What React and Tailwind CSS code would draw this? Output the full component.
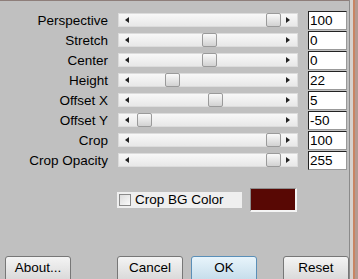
const rows = [
  { label: "Perspective", value: "100", thumb: 147 },
  { label: "Stretch", value: "0", thumb: 83 },
  { label: "Center", value: "0", thumb: 83 },
  { label: "Height", value: "22", thumb: 46 },
  { label: "Offset X", value: "5", thumb: 89 },
  { label: "Offset Y", value: "-50", thumb: 18 },
  { label: "Crop", value: "100", thumb: 147 },
  { label: "Crop Opacity", value: "255", thumb: 147 },
];

function Slider({ thumb }) {
  return (
    <div className="relative w-[180px] h-[14px] bg-gradient-to-b from-[#f8f8f8] to-[#e8e8e8] border border-[#dcdcdc]">
      <span className="absolute left-[6px] top-[3px] w-0 h-0 border-y-[3.5px] border-y-transparent border-r-[4px] border-r-[#222]" />
      <span
        className="absolute top-[-1px] w-[15px] h-[14px] rounded-[2px] border border-[#9a9a9a] bg-gradient-to-b from-[#fafafa] to-[#d2d2d2]"
        style={{ left: thumb }}
      />
      <span className="absolute right-[7px] top-[3px] w-0 h-0 border-y-[3.5px] border-y-transparent border-l-[4px] border-l-[#222]" />
    </div>
  );
}

function Button({ children, primary }) {
  return (
    <button
      type="button"
      className={`w-[66px] h-[26px] rounded-[3px] border text-[13.5px] text-black pb-[2px] ${
        primary
          ? "border-[#5a8fb8] bg-gradient-to-b from-[#e8f4fb] to-[#c4dcea]"
          : "border-[#777] bg-gradient-to-b from-[#f4f4f4] to-[#d8d8d8]"
      }`}
    >
      {children}
    </button>
  );
}

export default function App() {
  return (
    <div className="w-[358px] h-[279px] overflow-hidden flex bg-[#c0c0c0] font-['Liberation_Sans',Arial,sans-serif] text-black">
      <div className="flex-1 flex flex-col border-t border-[#8e7e7a]">
        <div className="pt-[9px] flex flex-col">
          {rows.map((r) => (
            <div key={r.label} className="h-[20px] flex items-center">
              <div className="w-[108px] text-right text-[13.5px] leading-none pt-[1px]">{r.label}</div>
              <div className="ml-[10px]">
                <Slider thumb={r.thumb} />
              </div>
              <div className="ml-[10px] w-[39px] h-[19px] bg-white border-t border-l border-[#222] border-r border-b border-r-[#999] border-b-[#999] text-[13.5px] leading-[17px] pl-[1px]">
                {r.value}
              </div>
            </div>
          ))}
        </div>

        <div className="mt-[18px] h-[24px] flex items-center">
          <div className="ml-[117px] w-[125px] h-[16px] bg-[#efefef] flex items-center">
            <span className="ml-[2px] w-[12px] h-[12px] border border-[#8a8a8a] bg-gradient-to-br from-[#dcdcdc] to-[#fafafa]" />
            <span className="ml-[4px] text-[13.5px] leading-none">Crop BG Color</span>
          </div>
          <div className="ml-[8px] w-[47px] h-[24px] border-t border-l border-[#8c8c8c] border-r-2 border-b-2 border-r-[#f4f4f4] border-b-[#f4f4f4] bg-[#580804]" />
        </div>

        <div className="mt-[43px] flex">
          <div className="ml-[5px]">
            <Button>About...</Button>
          </div>
          <div className="ml-[46px]">
            <Button>Cancel</Button>
          </div>
          <div className="ml-[8px]">
            <Button primary>OK</Button>
          </div>
          <div className="ml-[26px]">
            <Button>Reset</Button>
          </div>
        </div>
      </div>
      <div className="w-px bg-[#8a8a8a]" />
      <div className="w-[3px] bg-[#d6d2ce]" />
      <div className="w-[2px] bg-[#c98463]" />
      <div className="w-[3px] bg-[#b49a90]" />
    </div>
  );
}
